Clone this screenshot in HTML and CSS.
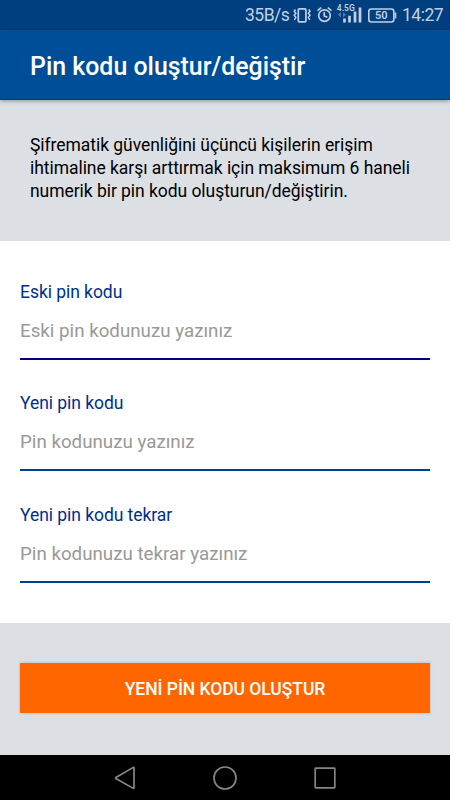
FILE: index.html
```html
<!DOCTYPE html>
<html lang="tr">
<head>
<meta charset="utf-8">
<title>Pin kodu oluştur/değiştir</title>
<link rel="stylesheet" href="styles.css">
</head>
<body>
<div class="status-bar">
  <span class="speed">35B/s</span>
  <svg class="status-icons" width="112" height="30" viewBox="290 0 112 30" fill="none" stroke="#c3cfe3">
    <rect x="298.3" y="8.800" width="7.600" height="13" rx="1" stroke-width="1.700"/>
    <path d="M295.500 9.500l-1.300 1.800 1.700 2-1.700 2 1.700 2-1.500 2.700M308.700 9.500l1.300 1.800-1.700 2 1.700 2-1.700 2 1.500 2.700" stroke-width="1.500"/>
    <circle cx="324.500" cy="15.600" r="5.800" stroke-width="1.700"/>
    <path d="M324.200 12v4l3.200 1.200M317.500 10.700l3.700-3M327.800 7.700l3.700 3" stroke-width="1.600"/>
    <path d="M344.500 18.500v4M349.500 15.700v6.800M355 11.500v11M360 7.500v15" stroke-width="2.700"/>
    <path d="M341 12l-3 2.700 3 2.700zM343 12l3 2.700-3 2.700z" fill="#5578a5" stroke="none"/>
    <text class="network" x="336.800" y="11">4.5G</text>
    <rect x="368.800" y="9" width="25" height="13" rx="2.500" stroke-width="1.600"/>
    <path d="M395.500 12.500v6" stroke-width="1.600"/>
    <text class="charge" x="381.300" y="19.400" text-anchor="middle">50</text>
  </svg>
  <span class="clock">14:27</span>
</div>
<header class="app-bar"><h1>Pin kodu oluştur/değiştir</h1></header>
<section class="intro">
  <p>Şifrematik güvenliğini üçüncü kişilerin erişim<br>ihtimaline karşı arttırmak için maksimum 6 haneli<br>numerik bir pin kodu oluşturun/değiştirin.</p>
</section>
<main class="form">
  <div class="field field-active">
    <label for="old-pin">Eski pin kodu</label>
    <input id="old-pin" placeholder="Eski pin kodunuzu yazınız">
  </div>
  <div class="field">
    <label for="new-pin">Yeni pin kodu</label>
    <input id="new-pin" placeholder="Pin kodunuzu yazınız">
  </div>
  <div class="field">
    <label for="repeat-pin">Yeni pin kodu tekrar</label>
    <input id="repeat-pin" placeholder="Pin kodunuzu tekrar yazınız">
  </div>
</main>
<footer class="actions"><button type="button">YENİ PİN KODU OLUŞTUR</button></footer>
<nav class="nav-bar">
  <svg width="24" height="24" viewBox="0 0 24 24"><path d="M21 1.700v20.300a.4.400 0 0 1-.7.300L2.800 12.500a.6.600 0 0 1 0-1L20.300 1.400a.4.400 0 0 1 .7.300z"/></svg>
  <svg width="24" height="24" viewBox="0 0 24 24"><circle cx="12" cy="12" r="11"/></svg>
  <svg width="24" height="24" viewBox="0 0 24 24"><rect x="2.200" y="2.200" width="19.600" height="19.600" rx=".5"/></svg>
</nav>
</body>
</html>
```
FILE: styles.css
```css
* { box-sizing: border-box; }
body {
  margin: 0;
  width: 450px;
  height: 800px;
  display: flex;
  flex-direction: column;
  overflow: hidden;
  font-family: Roboto, sans-serif;
  background: #fff;
}
.status-bar {
  height: 30px;
  display: flex;
  justify-content: flex-end;
  align-items: center;
  padding-right: 8px;
  background: #003f7f;
  color: #c3cfe3;
  font-size: 17.5px;
  letter-spacing: -0.5px;
  line-height: 32px;
  white-space: nowrap;
}
.speed { width: 45px; }
.clock { width: 40px; text-align: right; }
.status-icons { flex: none; }
.status-icons text { fill: #c3cfe3; stroke: none; font-weight: 600; letter-spacing: 0; }
.network { font-size: 8.5px; }
.charge { font-size: 11px; }
.app-bar {
  height: 70px;
  display: flex;
  align-items: center;
  padding-left: 30px;
  background: #004e98;
  border-bottom: 1px solid #003c88;
  box-shadow: 0 1px 4px rgba(0, 0, 0, .35);
  position: relative;
  z-index: 1;
}
h1 { margin: 0; padding-top: 3px; color: #fff; font-size: 24.9px; font-weight: 500; }
.intro { height: 141px; padding: 34.4px 30px 0; background: #dcdfe4; }
.intro p { margin: 0; font-size: 17.5px; letter-spacing: -0.05px; line-height: 22.7px; color: #000; white-space: nowrap; }
.form { height: 382px; padding: 39px 20px 0; }
.field { height: 111.3px; display: flex; flex-direction: column; }
label { height: 24px; line-height: 24px; font-size: 17.5px; letter-spacing: -0.05px; color: #003087; }
input {
  height: 56px;
  padding: 0;
  border: 0;
  border-bottom: 2px solid #004092;
  outline: 0;
  background: transparent;
  font: 18.75px Roboto, sans-serif;
}
.field-active input { border-color: #000087; }
input::placeholder { color: #999; opacity: 1; }
.actions { height: 132px; padding: 40px 20px; background: #dcdfe4; }
button {
  display: block;
  width: 100%;
  height: 50px;
  padding: 2px 0 0;
  border: 0;
  background: #f60;
  color: #fff;
  font: 500 17.5px Roboto, sans-serif;
  letter-spacing: -0.05px;
  box-shadow: 0 0 3px rgba(0, 0, 0, .2);
}
.nav-bar {
  height: 45px;
  display: flex;
  justify-content: center;
  align-items: center;
  gap: 76px;
  background: #000;
}
.nav-bar svg { fill: none; stroke: #858585; stroke-width: 1.7; }
```
